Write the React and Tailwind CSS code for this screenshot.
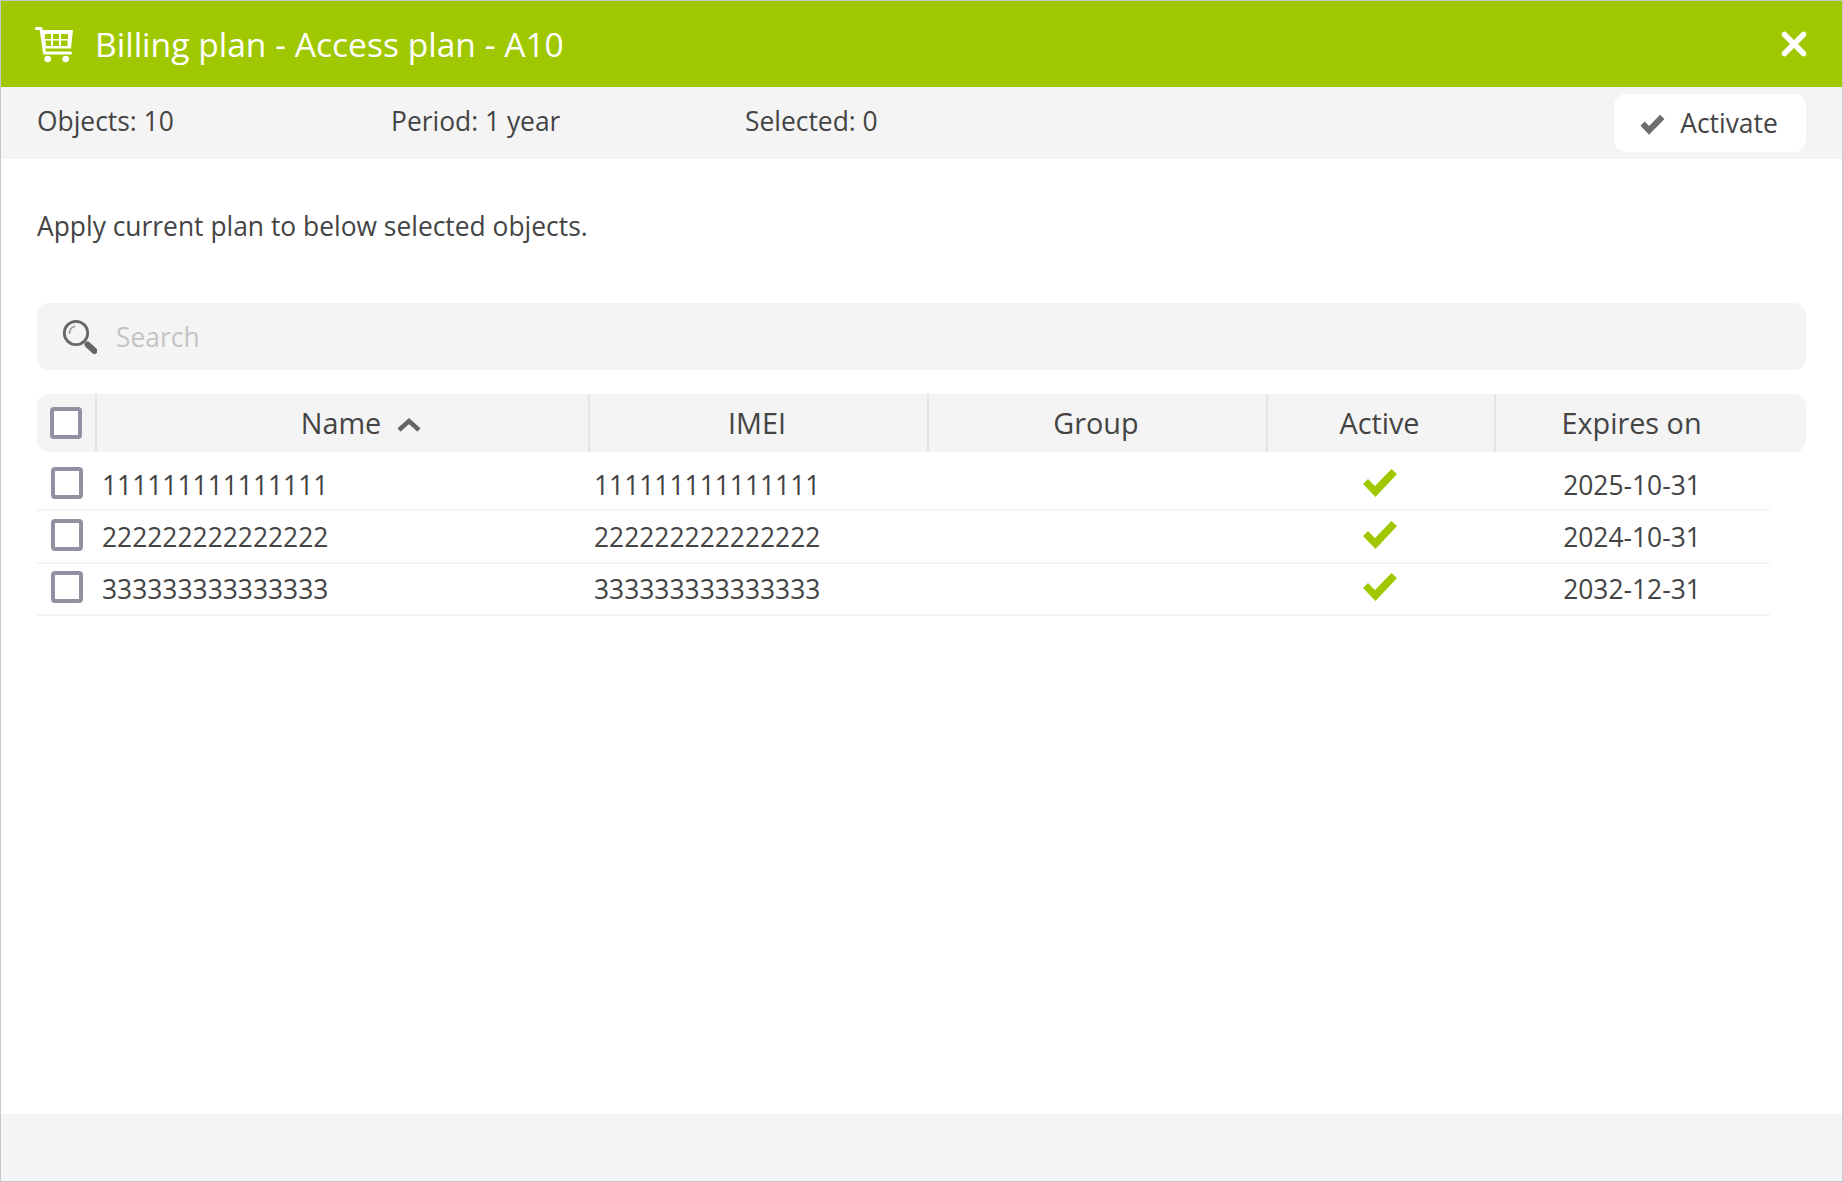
const rows = [
  { id: "111111111111111", expires: "2025-10-31", size: "h-[59px] pt-[8px]" },
  { id: "222222222222222", expires: "2024-10-31", size: "h-[53px]" },
  { id: "333333333333333", expires: "2032-12-31", size: "h-[52px]" },
]

const CartIcon = () => (
  <svg width="38" height="38" viewBox="0 0 38 38" fill="none" className="shrink-0">
    <path d="M1.500 3.500h4.500l3.500 24.500h26" stroke="#fff" strokeWidth="3" strokeLinecap="round" strokeLinejoin="round" />
    <path d="M7 5h31l-2 18.500H9z" fill="#fff" />
    <path d="M10 9h6v5h-6zM18 9h6v5h-6zM26 9h7v5h-7zM10.500 15.500h5.500v5.500h-5zM18 15.500h6v5.500h-6zM26 15.500h6.500v5.500H26z" fill="#9fc800" />
    <circle cx="12.700" cy="34" r="3.300" fill="#fff" />
    <circle cx="30.700" cy="34" r="3.300" fill="#fff" />
  </svg>
)

const SearchIcon = () => (
  <svg width="36" height="36" viewBox="0 0 36 36" fill="none" className="shrink-0">
    <circle cx="15" cy="14" r="11.700" stroke="#666" strokeWidth="2.800" fill="#f4f4f4" />
    <path d="M8.500 14a7 7 0 0 1 5-6.500" stroke="#999" strokeWidth="1.800" strokeLinecap="round" />
    <path d="M26.500 25.500l7 6.500" stroke="#666" strokeWidth="6" strokeLinecap="round" />
  </svg>
)

const ThickCheck = () => (
  <svg viewBox="0 0 32 28" className="w-[25px] h-[21px] text-[#6e6e6e]" fill="currentColor">
    <path d="M0 15.500 5.500 10l6 6L26 1l6 5.500L11.500 27.500z" />
  </svg>
)

const ActiveCheck = () => (
  <svg viewBox="0 0 34 28" className="w-[34px] h-[28px] text-[#9fc800] mb-[4px]" fill="currentColor">
    <path d="M0 15 5 10l7 7L28.500 0 34 5 12.500 28z" />
  </svg>
)

const Checkbox = () => (
  <span className="block w-8 h-8 rounded border-4 border-[#9191a1] bg-white" />
)

export default function App() {
  return (
    <div className="w-[1843px] h-[1182px] flex flex-col border border-[#c8c8c8] bg-white text-[#444] font-['Open_Sans',sans-serif] text-[26.4px] overflow-hidden">
      <div className="h-[86px] shrink-0 bg-[#9fc800] text-white flex items-center pl-[34px] pr-[35px]">
        <CartIcon />
        <h1 className="ml-[22px] text-[33.6px] font-normal">Billing plan - Access plan - A10</h1>
        <svg width="26" height="26" viewBox="0 0 26 26" className="ml-auto">
          <path d="M3.500 3.500l19 19M22.500 3.500l-19 19" stroke="#fff" strokeWidth="5.500" strokeLinecap="round" />
        </svg>
      </div>

      <div className="h-[72px] shrink-0 bg-[#f4f4f4] flex items-center pl-[36px] pr-[36px]">
        <span className="w-[354px] mb-[2px]">Objects: 10</span>
        <span className="w-[354px] mb-[2px]">Period: 1 year</span>
        <span className="mb-[2px]">Selected: 0</span>
        <button className="ml-auto h-[58px] w-[192px] bg-white rounded-xl flex items-center justify-center gap-[15px] text-[26.4px] pt-[2px] pr-[2px]">
          <ThickCheck />
          Activate
        </button>
      </div>

      <div className="flex-1 px-[36px] pt-[49px]">
        <p className="leading-[36px]">Apply current plan to below selected objects.</p>

        <div className="mt-[59px] h-[67px] bg-[#f4f4f4] rounded-xl flex items-center pl-[24px]">
          <SearchIcon />
          <span className="ml-[19px] mt-[3px] text-[#c4c4c4]">Search</span>
        </div>

        <div className="mt-[24px] h-[58px] bg-[#f4f4f4] rounded-xl grid grid-cols-[58px_493px_339px_339px_228px_1fr] pr-[36px] items-stretch text-[28.8px]">
          <div className="flex items-center pl-[13px]"><Checkbox /></div>
          <div className="border-l-2 border-[#e4e4e4] flex items-center justify-center pr-[3px]">
            <span className="relative">
              Name
              <svg width="26" height="16" viewBox="0 0 26 16" className="absolute left-full top-[16px] ml-[15px]">
                <path d="M3 13l10-9 10 9" stroke="#666" strokeWidth="4.500" fill="none" />
              </svg>
            </span>
          </div>
          <div className="border-l-2 border-[#e4e4e4] flex items-center justify-center pr-[3px]">IMEI</div>
          <div className="border-l-2 border-[#e4e4e4] flex items-center justify-center pr-[3px]">Group</div>
          <div className="border-l-2 border-[#e4e4e4] flex items-center justify-center pr-[3px]">Active</div>
          <div className="border-l-2 border-[#e4e4e4] flex items-center justify-center pr-[3px]">Expires on</div>
        </div>

        <div className="mr-[36px]">
          {rows.map((row) => (
            <div
              key={row.id}
              className={`grid grid-cols-[64px_493px_339px_339px_228px_1fr] items-center border-b-2 border-[#f4f4f4] ${row.size}`}
            >
              <div className="pl-[14px] mb-[4px]"><Checkbox /></div>
              <div className="pt-[2px] pl-[1px]">{row.id}</div>
              <div className="pt-[2px]">{row.id}</div>
              <div></div>
              <div className="flex justify-center pr-[12px]"><ActiveCheck /></div>
              <div className="text-center pr-[6px] pt-[2px]">{row.expires}</div>
            </div>
          ))}
        </div>
      </div>

      <div className="h-[67px] shrink-0 bg-[#f4f4f4]"></div>
    </div>
  )
}
